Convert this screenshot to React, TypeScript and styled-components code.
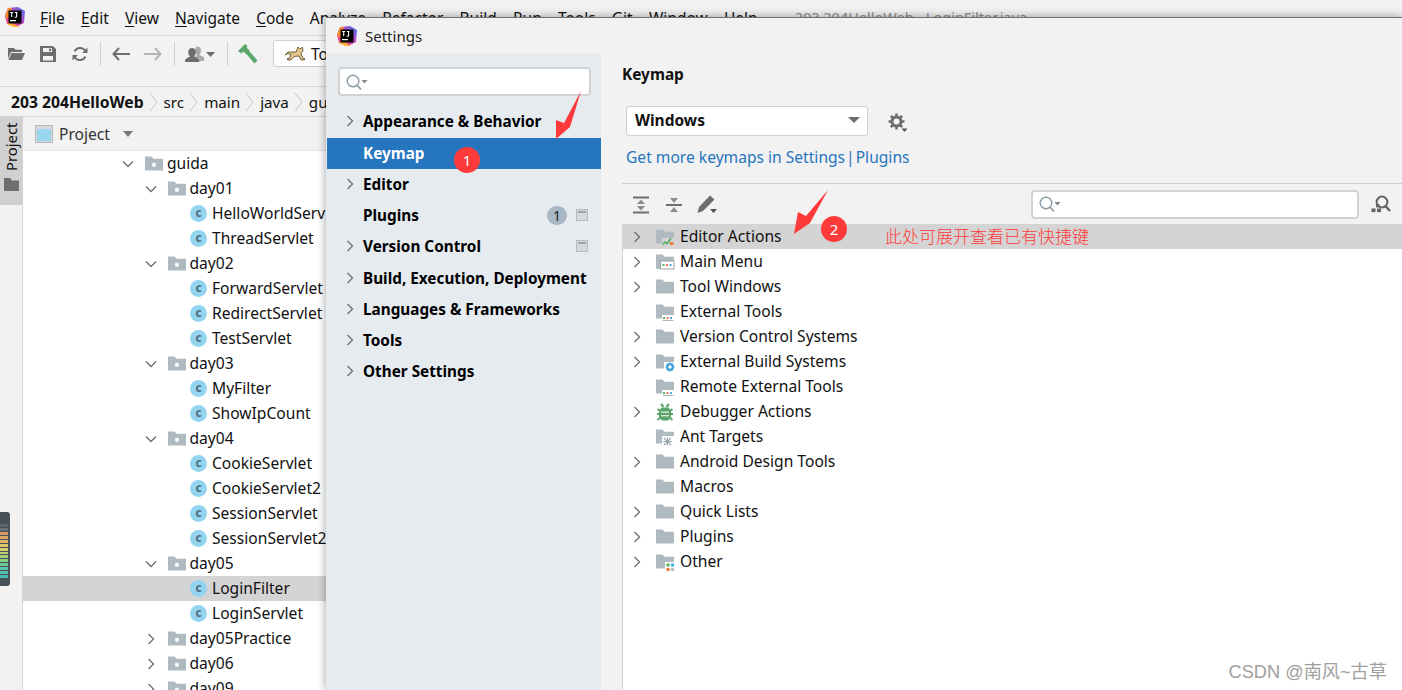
import React from "react";
import styled, { createGlobalStyle } from "styled-components";

const FONT = `"Noto Sans", "Noto Sans CJK SC", sans-serif`;

const Global = createGlobalStyle`
  html, body { margin: 0; padding: 0; background: #f2f2f2; overflow: hidden; }
  #root { width: 1402px; height: 690px; }
`;

const Page = styled.div`
  position: relative;
  width: 1402px;
  height: 690px;
  overflow: hidden;
  background: #f2f2f2;
  font-family: ${FONT};
  font-size: 15.6px;
  color: #111;
  display: flex;
  flex-direction: column;
`;

/* ---------- IDE behind ---------- */
const MenuBar = styled.div`
  height: 35px;
  flex: none;
  display: flex;
  align-items: center;
  padding-left: 5px;
  border-bottom: 1px solid #d4d4d4;
`;
const MenuLogo = styled.div`
  width: 20px;
  height: 20px;
  margin-right: 15px;
  margin-top: -2px;
  display: flex;
`;
const MenuItems = styled.div`
  display: flex;
  gap: 16.2px;
`;
const MenuItem = styled.span`
  white-space: nowrap;
  font-size: 15.5px;
  & u { text-underline-offset: 2px; }
`;
const WindowTitle = styled.span`
  margin-left: 37px;
  margin-top: -1px;
  color: #8e8e8e;
  white-space: nowrap;
  font-size: 14.5px;
`;
const ToolBar = styled.div`
  height: 51px;
  flex: none;
  display: flex;
  align-items: flex-start;
  padding-top: 4px;
  box-sizing: border-box;
  border-bottom: 1px solid #d4d4d4;
`;
const Slot = styled.div<{ $w: number }>`
  width: ${(p) => p.$w}px;
  height: 28px;
  display: flex;
  align-items: center;
  justify-content: center;
  flex: none;
`;
const VSep = styled.div`
  width: 1px;
  height: 24px;
  margin: 2px 4px;
  background: #cfcfcf;
  flex: none;
`;
const RunCombo = styled.div`
  margin-left: 9px;
  width: 200px;
  height: 27px;
  box-sizing: border-box;
  background: #fff;
  border: 1px solid #cfcfcf;
  border-radius: 3px;
  display: flex;
  align-items: center;
  padding-left: 11px;
  gap: 6px;
  flex: none;
`;
const Breadcrumb = styled.div`
  height: 30px;
  flex: none;
  box-sizing: border-box;
  border-bottom: 1px solid #d4d4d4;
  display: flex;
  align-items: center;
  padding-left: 11px;
  white-space: nowrap;
`;
const Crumb = styled.span<{ $bold?: boolean }>`
  font-weight: ${(p) => (p.$bold ? 700 : 400)};
  font-size: ${(p) => (p.$bold ? 15.7 : 15.2)}px;
`;
const CrumbSep = styled.svg`
  width: 10px;
  height: 24px;
  margin: 0 5px 0 5px;
  flex: none;
`;
const Body = styled.div`
  flex: 1;
  display: flex;
  min-height: 0;
`;
const Strip = styled.div`
  width: 22px;
  flex: none;
  border-right: 1px solid #d4d4d4;
`;
const StripTab = styled.div`
  height: 88px;
  background: #d0d0d0;
  display: flex;
  flex-direction: column;
  align-items: center;
  padding-top: 7px;
  box-sizing: border-box;
  gap: 7px;
`;
const StripLabel = styled.span`
  writing-mode: vertical-rl;
  transform: rotate(180deg);
  font-size: 14.8px;
  line-height: 20px;
  height: 47px;
`;
const TreePanel = styled.div`
  flex: 1;
  min-width: 0;
  display: flex;
  flex-direction: column;
`;
const PanelHeader = styled.div`
  height: 34px;
  flex: none;
  display: flex;
  align-items: center;
  box-sizing: border-box;
  border-bottom: 1px solid #e4e4e4;
  padding-left: 12px;
  gap: 6px;
  color: #333;
`;
const TreeBody = styled.div`
  flex: 1;
  background: #fff;
  overflow: hidden;
`;
const TreeRow = styled.div<{ $level: number; $selected?: boolean }>`
  height: 25px;
  display: flex;
  align-items: center;
  box-sizing: border-box;
  padding-left: ${(p) => 97 + p.$level * 22.5}px;
  background: ${(p) => (p.$selected ? "#d4d4d4" : "transparent")};
  white-space: nowrap;
`;
const ChevronBox = styled.div<{ $gap: number }>`
  width: 16px;
  height: 16px;
  margin-right: ${(p) => p.$gap}px;
  display: flex;
  align-items: center;
  justify-content: center;
  flex: none;
`;
const NodeLabel = styled.span<{ $gap: number }>`
  margin-left: ${(p) => p.$gap}px;
  font-size: 15.6px;
  line-height: 25px;
`;
const ClassIcon = styled.span`
  width: 17px;
  height: 17px;
  border-radius: 50%;
  background: #93d4ee;
  color: #4e6c7c;
  font-size: 12px;
  font-weight: 700;
  line-height: 15px;
  text-align: center;
  flex: none;
  margin-right: -1px;
`;
const Widget = styled.div`
  position: absolute;
  left: 0;
  top: 512px;
  width: 10px;
  height: 74px;
  background: #474f57;
  border-radius: 0 3px 3px 0;
  box-sizing: border-box;
  padding: 8px 2px 8px 0;
  display: flex;
  flex-direction: column;
  gap: 1px;
`;
const WidgetBar = styled.div<{ $c: string }>`
  flex: 1;
  background: ${(p) => p.$c};
`;

/* ---------- Settings dialog ---------- */
const Dialog = styled.div`
  position: absolute;
  left: 326px;
  top: 17px;
  right: 0;
  bottom: 0;
  background: #f2f2f2;
  border-top: 1px solid #6f6f6f;
  box-shadow: 0 0 9px rgba(0, 0, 0, 0.38);
  display: flex;
  flex-direction: column;
`;
const DialogTitle = styled.div`
  height: 35px;
  flex: none;
  display: flex;
  align-items: center;
  padding-left: 11px;
  gap: 8px;
  font-size: 15px;
  color: #222;
`;
const DialogBody = styled.div`
  flex: 1;
  display: flex;
  min-height: 0;
`;
const Sidebar = styled.div`
  width: 275px;
  flex: none;
  background: #e6ebf0;
  padding-top: 14px;
  box-sizing: border-box;
`;
const SearchBox = styled.div<{ $w: number }>`
  width: ${(p) => p.$w}px;
  height: 29px;
  box-sizing: border-box;
  background: #fff;
  border: 2px solid #d0d2d4;
  border-radius: 4px;
  display: flex;
  align-items: center;
  padding-left: 5px;
  flex: none;
`;
const SidebarSearch = styled.div`
  padding: 0 0 10.5px 12px;
`;
const NavRow = styled.div<{ $selected?: boolean }>`
  height: 31.25px;
  display: flex;
  align-items: center;
  box-sizing: border-box;
  padding: 0 13px 1.4px 16px;
  margin-left: ${(p) => (p.$selected ? "1px" : "0")};
  background: ${(p) => (p.$selected ? "#2675bf" : "transparent")};
  color: ${(p) => (p.$selected ? "#fff" : "#000")};
  font-weight: 700;
  font-size: 15.3px;
  white-space: nowrap;
`;
const NavChevron = styled.div<{ $selected?: boolean }>`
  width: 16px;
  height: 16px;
  margin-right: ${(p) => (p.$selected ? 4 : 5)}px;
  display: flex;
  align-items: center;
  justify-content: center;
  flex: none;
`;
const NavSpacer = styled.div`
  flex: 1;
`;
const CountBadge = styled.span`
  width: 20px;
  height: 19px;
  border-radius: 10px;
  background: #a9b8c4;
  color: #222;
  font-size: 14px;
  font-weight: 400;
  line-height: 19px;
  text-align: center;
  margin-right: 9px;
`;
const Pane = styled.div`
  flex: 1;
  min-width: 0;
  display: flex;
  flex-direction: column;
  padding-left: 21px;
`;
const PaneTitle = styled.div`
  font-weight: 700;
  font-size: 15.4px;
  line-height: 20px;
  margin-top: 12px;
`;
const SelectRow = styled.div`
  display: flex;
  align-items: center;
  margin: 21px 0 0 4px;
  gap: 20px;
`;
const Select = styled.div`
  width: 242px;
  height: 30px;
  box-sizing: border-box;
  background: #fff;
  border: 1px solid #cfcfcf;
  border-radius: 3px;
  display: flex;
  align-items: center;
  justify-content: space-between;
  padding: 0 7px 2px 8px;
  font-weight: 700;
  font-size: 15.5px;
`;
const GearBox = styled.div`
  display: flex;
  margin-top: 4px;
`;
const Caret = styled.span<{ $size?: number; $color?: string }>`
  width: 0;
  height: 0;
  border-left: ${(p) => p.$size ?? 6}px solid transparent;
  border-right: ${(p) => p.$size ?? 6}px solid transparent;
  border-top: ${(p) => (p.$size ?? 6) * 1.1}px solid ${(p) => p.$color ?? "#6e6e6e"};
  flex: none;
`;
const LinkLine = styled.div`
  margin: 10px 0 0 4px;
  color: #2675bf;
  font-size: 15.6px;
  line-height: 22px;
  display: flex;
  gap: 1px;
`;
const PaneDivider = styled.div`
  height: 1px;
  background: #cfcfcf;
  margin-top: 15px;
`;
const ActionBar = styled.div`
  height: 40px;
  display: flex;
  align-items: center;
  padding-left: 8px;
  flex: none;
`;
const ActionIcon = styled.div`
  width: 22px;
  height: 22px;
  margin-right: 11px;
  margin-top: 2px;
  display: flex;
  align-items: center;
  justify-content: center;
  flex: none;
`;
const ActionRight = styled.div`
  margin-left: auto;
  display: flex;
  align-items: center;
  gap: 12px;
  padding-right: 11px;
`;
const KeyTree = styled.div`
  flex: 1;
  background: #fff;
  border-left: 1px solid #d0d0d0;
  overflow: hidden;
`;
const KeyRow = styled.div<{ $selected?: boolean }>`
  height: 25px;
  display: flex;
  align-items: center;
  padding-left: 6px;
  background: ${(p) => (p.$selected ? "#d4d4d4" : "transparent")};
  white-space: nowrap;
`;

/* ---------- Annotations ---------- */
const ArrowLayer = styled.svg`
  position: absolute;
  left: 0;
  top: 0;
  pointer-events: none;
`;
const Bubble = styled.div<{ $x: number; $y: number }>`
  position: absolute;
  left: ${(p) => p.$x - 13}px;
  top: ${(p) => p.$y - 13}px;
  width: 26px;
  height: 26px;
  border-radius: 50%;
  background: #ff3a3a;
  color: #fff;
  font-size: 15px;
  line-height: 26px;
  text-align: center;
`;
const Note = styled.div`
  position: absolute;
  left: 885px;
  top: 224px;
  line-height: 24px;
  font-size: 17px;
  color: #ff3a3a;
  font-family: "Noto Sans CJK SC", sans-serif;
  font-weight: 300;
  white-space: nowrap;
`;
const Watermark = styled.div`
  position: absolute;
  right: 15px;
  top: 661px;
  font-family: "Liberation Sans", "Noto Sans CJK SC", sans-serif;
  font-size: 18.2px;
  line-height: 22px;
  color: #a0a0a0;
  white-space: nowrap;
`;

/* ---------- Drawings ---------- */
const Logo = ({ size }: { size: number }) => (
  <svg width={size} height={size} viewBox="0 0 20 20">
    <defs>
      <linearGradient id="lg" x1="0" y1="1" x2="1" y2="0">
        <stop offset="0" stopColor="#fc4a6b" />
        <stop offset=".5" stopColor="#d23fc0" />
        <stop offset="1" stopColor="#3a7cf5" />
      </linearGradient>
    </defs>
    <polygon points="3,1 13,0 20,4 19,16 11,20 2,17 0,9" fill="url(#lg)" />
    <polygon points="0,9 3,1 7,1 3,12" fill="#fb8a2e" />
    <polygon points="2,17 8,20 14,20 5,14" fill="#ffb02e" opacity=".9" />
    <rect x="3.5" y="3.5" width="13" height="13" fill="#000" />
    <rect x="5" y="13" width="6" height="1.2" fill="#fff" />
    <path d="M5.2 5.5h3M6.7 5.5v4.6M9.8 5.5h2.6M11.6 5.5v3.8c0 .9-1 1.2-2 .6" stroke="#fff" strokeWidth="1.1" fill="none" />
  </svg>
);

const Chevron = ({ open, color = "#6e6e6e" }: { open?: boolean; color?: string }) => (
  <svg width="12" height="12" viewBox="0 0 12 12">
    <path d={open ? "M1 3.5 6 8.5 11 3.5" : "M3.5 1 8.5 6 3.5 11"} stroke={color} strokeWidth="1.3" fill="none" />
  </svg>
);

const FOLDER = "M0 1.5h6.5l2 2.2H18V15.5H0z";

type Badge = "dot" | "chart" | "menu" | "tools" | "gear" | "ant" | "other" | "none";
const Folder = ({ badge = "none" }: { badge?: Badge }) => (
  <svg width="18" height="18" viewBox="0 0 18 18" style={{ flex: "none", overflow: "visible" }}>
    {badge === "menu" ? (
      <path d="M0 1.5h6.5l2 2.2H18V8H5v8H0z" fill="#aeb9c0" />
    ) : (
      <path d={FOLDER} fill="#aeb9c0" />
    )}
    {badge === "dot" && <circle cx="9" cy="9.8" r="2.2" fill="#f4f6f7" />}
    {badge === "chart" && (
      <>
        <rect x="6" y="10" width="12" height="8" fill="#d4d4d4" />
        <path d="M6.5 16.5 9 14l2 1.6 4-5" stroke="#4fa85a" strokeWidth="1.6" fill="none" />
        <rect x="14" y="14" width="3.4" height="3" fill="#ee7a3a" />
      </>
    )}
    {badge === "menu" && (
      <>
        <rect x="4.5" y="8" width="13.5" height="8" fill="#fff" stroke="#9aa5ab" strokeWidth="1" />
        <rect x="6.5" y="11" width="2" height="2" fill="#55b060" />
        <rect x="10" y="11" width="2" height="2" fill="#e67a55" />
        <rect x="13.5" y="11" width="2" height="2" fill="#4aa5e0" />
      </>
    )}
    {badge === "tools" && (
      <>
        <rect x="6" y="12" width="12" height="6" fill="#fff" />
        <rect x="7" y="14" width="2" height="2" fill="#55b060" />
        <rect x="10.5" y="14" width="2" height="2" fill="#e67a55" />
        <rect x="14" y="14" width="2" height="2" fill="#4aa5e0" />
        <rect x="6.5" y="17" width="11" height="1" fill="#aeb9c0" />
      </>
    )}
    {badge === "gear" && (
      <>
        <rect x="8" y="9" width="10" height="10" fill="#fff" />
        <circle cx="14" cy="14" r="2.8" fill="none" stroke="#3fa2dd" strokeWidth="2.2" />
        <path d="M14 9.500v2M14 16.500v2M9.600 14h2M16.400 14h2M10.900 10.900l1.400 1.400M15.700 15.700l1.400 1.400M17.100 10.900l-1.400 1.400M12.300 15.700l-1.400 1.400" stroke="#3fa2dd" strokeWidth="1.6" />
      </>
    )}
    {badge === "ant" && (
      <>
        <rect x="6" y="8" width="12" height="10" fill="#fff" />
        <path d="M8 10l7 7M15 10l-7 7M7 13.500h9M11.500 9.500v8" stroke="#9aa5ab" strokeWidth="1.1" />
      </>
    )}
    {badge === "other" && (
      <>
        <rect x="9" y="9" width="9" height="10" fill="#fff" />
        <circle cx="12" cy="12" r="1.8" fill="#55b060" />
        <circle cx="16.500" cy="12" r="1.8" fill="#3fb4e6" />
        <circle cx="12" cy="16.500" r="1.8" fill="#ee7a3a" />
        <circle cx="16.500" cy="16.500" r="1.8" fill="#aeb9c0" />
      </>
    )}
  </svg>
);

const Bug = () => (
  <svg width="18" height="18" viewBox="0 0 18 18" style={{ flex: "none" }}>
    <path d="M5 1l2.500 3M13 1l-2.500 3M1.500 6l3 2M16.500 6l-3 2M1 11h3M14 11h3M1.500 17l3-2.500M16.500 17l-3-2.500" stroke="#5aa468" strokeWidth="2" />
    <path d="M5.500 4.500h7L15 8v6l-3 3.500H6L3 14V8z" fill="#5aa468" />
    <rect x="5" y="8.500" width="8" height="1.400" fill="#d8ecd9" />
    <rect x="5" y="12" width="8" height="1.400" fill="#d8ecd9" />
  </svg>
);

const Magnifier = () => (
  <svg width="26" height="18" viewBox="0 0 26 18" style={{ flex: "none" }}>
    <circle cx="8" cy="8" r="5.800" fill="none" stroke="#8a9aa3" strokeWidth="1.4" />
    <path d="M12 12.200 16 16.400" stroke="#8a9aa3" strokeWidth="1.6" />
    <path d="M16.500 7h6l-3 3.400z" fill="#8a8a8a" />
  </svg>
);

const FolderOpenIcon = () => (
  <svg width="18" height="16" viewBox="0 0 18 16">
    <path d="M1 2h6l1.500 1.700H15V6H4L1 13z" fill="#6e6e6e" />
    <path d="M4.500 7H18l-3 7H1.500z" fill="#6e6e6e" />
  </svg>
);
const SaveIcon = () => (
  <svg width="16" height="16" viewBox="0 0 16 16">
    <path fillRule="evenodd" d="M0 0h13l3 3v13H0zM3 2v4h9V2zM3 10v4.500h10V10z" fill="#6e6e6e" />
    <rect x="9" y="2.600" width="2" height="2.600" fill="#6e6e6e" />
  </svg>
);
const SyncIcon = () => (
  <svg width="16" height="16" viewBox="0 0 16 16">
    <path d="M13.500 5.400A6 6 0 0 0 2.600 5.500M2.500 10.600a6 6 0 0 0 10.900-.1" stroke="#6e6e6e" strokeWidth="2" fill="none" />
    <path d="M15.500 1.500v5.500H10zM0.500 14.500V9H6z" fill="#6e6e6e" />
  </svg>
);
const ArrowIcon = ({ right, color }: { right?: boolean; color: string }) => (
  <svg width="18" height="14" viewBox="0 0 18 14" style={right ? { transform: "scaleX(-1)" } : undefined}>
    <path d="M7 1 1.500 7 7 13M2 7h16" stroke={color} strokeWidth="2" fill="none" />
  </svg>
);
const UserIcon = () => (
  <svg width="32" height="16" viewBox="0 0 32 16">
    <path d="M10.500 0.500c2 0 3.500 1.700 3.500 4 0 2-1 3.400-1.600 4 .4 1 2.700 1.600 4.600 3V15H6v-1c0-2 3-3.600 4-5-.9-1-2-2.200-2-4 0-2.600 1-4.500 2.500-4.500z" fill="#8a8a8a" opacity=".7" transform="translate(2 0)" />
    <path d="M7 2c2.300 0 3.800 1.800 3.800 4.300 0 2-1 3.200-1.600 3.900.5 1.200 5 1.700 5 4.800v1H0v-1c0-3 4.400-3.600 5-4.800C4.300 9.500 3.200 8.300 3.200 6.300 3.200 3.800 4.700 2 7 2z" fill="#6e6e6e" />
    <path d="M21 6h9l-4.500 5z" fill="#6e6e6e" />
  </svg>
);
const HammerIcon = () => (
  <svg width="20" height="20" viewBox="0 0 20 20">
    <path d="M0 7 7 0l2.500 2-1 1.500L12 7l-3.500 3.500L5.500 7.500 3 9.500z" fill="#59a869" />
    <path d="M8 9.500 11 7l8.500 9.500-3 3z" fill="#59a869" />
  </svg>
);
const TomcatIcon = () => (
  <svg width="20" height="16" viewBox="0 0 20 16">
    <path d="M13 1l1.500 1.500h1.500L17.500 1l.5 4-2 2.500 2 5h1.500v1.500h-3.500l-2-4-5 .5-3 3.500H2.500V12.500H4l2-4L3 7.500 0 9l3-3h8z" fill="#e2c48a" stroke="#57421f" strokeWidth=".8" />
  </svg>
);
const ProjectIcon = () => (
  <svg width="18" height="18" viewBox="0 0 18 18">
    <rect x=".5" y=".5" width="17" height="17" fill="#d6dadd" stroke="#b4bbc0" />
    <rect x="2" y="4" width="14" height="12" fill="#9ad6f0" />
  </svg>
);
const StripFolder = () => (
  <svg width="15" height="13" viewBox="0 0 15 13">
    <path d="M0 0h6l2 2.400h7V13H0z" fill="#6e6e6e" />
  </svg>
);
const ExpandIcon = () => (
  <svg width="18" height="18" viewBox="0 0 18 18">
    <path d="M1 1.500h16M1 16.500h16" stroke="#6e6e6e" strokeWidth="2" />
    <path d="M9 3.500 13 8H5zM9 14.500 13 10H5z" fill="#8a8a8a" />
  </svg>
);
const CollapseIcon = () => (
  <svg width="18" height="18" viewBox="0 0 18 18">
    <path d="M1 9h16" stroke="#6e6e6e" strokeWidth="2" />
    <path d="M9 7 13 2H5zM9 11 13 16H5z" fill="#8a8a8a" />
  </svg>
);
const PencilIcon = () => (
  <svg width="22" height="22" viewBox="0 0 22 22">
    <path d="M14 1.500 18.500 5.500 7 17l-5.500 2L3 13z" fill="#6e6e6e" />
    <path d="M14 15h7l-3.500 4z" fill="#4f4f4f" />
  </svg>
);
const GearIcon = () => (
  <svg width="20" height="20" viewBox="0 0 20 20">
    <circle cx="8.500" cy="8.500" r="4.500" fill="none" stroke="#6e6e6e" strokeWidth="3" />
    <path d="M8.500 .5v3M8.500 13.500v3M.5 8.500h3M13.500 8.500h3M2.800 2.800 5 5M12 12l2.200 2.200M14.200 2.800 12 5M5 12l-2.200 2.200" stroke="#6e6e6e" strokeWidth="2.600" />
    <path d="M13.500 15.500h6l-3 3.500z" fill="#555" />
  </svg>
);
const FindShortcutIcon = () => (
  <svg width="20" height="18" viewBox="0 0 20 18">
    <circle cx="11" cy="7" r="5.400" fill="none" stroke="#636363" strokeWidth="2" />
    <path d="M14.500 11 19 16" stroke="#636363" strokeWidth="2.400" />
    <rect x="0.500" y="13.500" width="4" height="3.600" fill="#636363" />
    <rect x="6" y="13.500" width="4" height="3.600" fill="#636363" />
    <rect x="5" y="9" width="3.500" height="3.400" fill="#636363" />
  </svg>
);
const ProjectLevelIcon = () => (
  <svg width="12" height="12" viewBox="0 0 12 12" style={{ flex: "none" }}>
    <rect x=".5" y=".5" width="11" height="11" fill="#d4d9dd" stroke="#b5bcc2" />
    <rect x="2" y="2" width="8" height="2" fill="#9aa5ab" />
  </svg>
);

/* ---------- Data ---------- */
type TreeItem = { label: string; level: number; kind: "folder" | "class"; open?: boolean; selected?: boolean };
const folder = (label: string, level: number, open = true): TreeItem => ({ label, level, kind: "folder", open });
const cls = (label: string, selected = false): TreeItem => ({ label, level: 2, kind: "class", selected });

const tree: TreeItem[] = [
  folder("guida", 0),
  folder("day01", 1),
  cls("HelloWorldServlet"),
  cls("ThreadServlet"),
  folder("day02", 1),
  cls("ForwardServlet"),
  cls("RedirectServlet"),
  cls("TestServlet"),
  folder("day03", 1),
  cls("MyFilter"),
  cls("ShowIpCount"),
  folder("day04", 1),
  cls("CookieServlet"),
  cls("CookieServlet2"),
  cls("SessionServlet"),
  cls("SessionServlet2"),
  folder("day05", 1),
  cls("LoginFilter", true),
  cls("LoginServlet"),
  folder("day05Practice", 1, false),
  folder("day06", 1, false),
  folder("day09", 1, false),
];

const menus: [string, string][] = [
  ["F", "ile"],
  ["E", "dit"],
  ["V", "iew"],
  ["N", "avigate"],
  ["C", "ode"],
  ["", "Analyze"],
  ["", "Refactor"],
  ["", "Build"],
  ["", "Run"],
  ["", "Tools"],
  ["", "Git"],
  ["", "Window"],
  ["", "Help"],
];

const navItems = [
  { label: "Appearance & Behavior", arrow: true },
  { label: "Keymap", selected: true },
  { label: "Editor", arrow: true },
  { label: "Plugins", count: 1, level: true },
  { label: "Version Control", arrow: true, level: true },
  { label: "Build, Execution, Deployment", arrow: true },
  { label: "Languages & Frameworks", arrow: true },
  { label: "Tools", arrow: true },
  { label: "Other Settings", arrow: true },
];

const keyRows: { label: string; arrow: boolean; badge?: Badge; bug?: boolean; selected?: boolean }[] = [
  { label: "Editor Actions", arrow: true, badge: "chart", selected: true },
  { label: "Main Menu", arrow: true, badge: "menu" },
  { label: "Tool Windows", arrow: true },
  { label: "External Tools", arrow: false, badge: "tools" },
  { label: "Version Control Systems", arrow: true },
  { label: "External Build Systems", arrow: true, badge: "gear" },
  { label: "Remote External Tools", arrow: false, badge: "tools" },
  { label: "Debugger Actions", arrow: true, bug: true },
  { label: "Ant Targets", arrow: false, badge: "ant" },
  { label: "Android Design Tools", arrow: true },
  { label: "Macros", arrow: false },
  { label: "Quick Lists", arrow: true },
  { label: "Plugins", arrow: true },
  { label: "Other", arrow: true, badge: "other" },
];

const widgetColors = ["#474f57", "#5d646b", "#6a7076", "#d89a63", "#dba566", "#dcb368", "#dcc36a", "#d3cd6c", "#bcd071", "#a3d07a", "#86cd86", "#6cc996", "#5cc4a6", "#52bfb0", "#4cb8b5"];

const CrumbChevron = () => (
  <CrumbSep viewBox="0 0 10 24">
    <path d="M1 3 8 12 1 21" stroke="#c4c4c4" strokeWidth="1" fill="none" />
  </CrumbSep>
);

export default function App() {
  return (
    <Page>
      <Global />
      <MenuBar>
        <MenuLogo>
          <Logo size={20} />
        </MenuLogo>
        <MenuItems>
          {menus.map(([u, rest]) => (
            <MenuItem key={u + rest}>
              {u && <u>{u}</u>}
              {rest}
            </MenuItem>
          ))}
        </MenuItems>
        <WindowTitle>203 204HelloWeb - LoginFilter.java</WindowTitle>
      </MenuBar>
      <ToolBar>
        <Slot $w={32}><FolderOpenIcon /></Slot>
        <Slot $w={32}><SaveIcon /></Slot>
        <Slot $w={32}><SyncIcon /></Slot>
        <VSep />
        <Slot $w={31}><ArrowIcon color="#6e6e6e" /></Slot>
        <Slot $w={34}><ArrowIcon right color="#b4b4b4" /></Slot>
        <VSep />
        <Slot $w={44}><UserIcon /></Slot>
        <VSep />
        <Slot $w={32}><HammerIcon /></Slot>
        <RunCombo>
          <TomcatIcon />
          <span>Tomcat</span>
        </RunCombo>
      </ToolBar>
      <Breadcrumb>
        <Crumb $bold>203 204HelloWeb</Crumb>
        <CrumbChevron />
        <Crumb>src</Crumb>
        <CrumbChevron />
        <Crumb>main</Crumb>
        <CrumbChevron />
        <Crumb>java</Crumb>
        <CrumbChevron />
        <Crumb>guida</Crumb>
      </Breadcrumb>
      <Body>
        <Strip>
          <StripTab>
            <StripLabel>Project</StripLabel>
            <StripFolder />
          </StripTab>
        </Strip>
        <TreePanel>
          <PanelHeader>
            <ProjectIcon />
            <span>Project</span>
            <Slot $w={24}><Caret $size={5.500} $color="#777" /></Slot>
          </PanelHeader>
          <TreeBody>
            {tree.map((n) => (
              <TreeRow key={n.label} $level={n.level} $selected={n.selected}>
                <ChevronBox $gap={9}>
                  {n.kind === "folder" && <Chevron open={n.open} />}
                </ChevronBox>
                {n.kind === "folder" ? <Folder badge="dot" /> : <ClassIcon>c</ClassIcon>}
                <NodeLabel $gap={n.kind === "folder" ? 4 : 6}>{n.label}</NodeLabel>
              </TreeRow>
            ))}
          </TreeBody>
        </TreePanel>
      </Body>
      <Widget>
        {widgetColors.map((c, i) => (
          <WidgetBar key={i} $c={c} />
        ))}
      </Widget>

      <Dialog>
        <DialogTitle>
          <Logo size={20} />
          <span>Settings</span>
        </DialogTitle>
        <DialogBody>
          <Sidebar>
            <SidebarSearch>
              <SearchBox $w={253}><Magnifier /></SearchBox>
            </SidebarSearch>
            {navItems.map((it) => (
              <NavRow key={it.label} $selected={it.selected}>
                <NavChevron $selected={it.selected}>{it.arrow && <Chevron />}</NavChevron>
                <span>{it.label}</span>
                <NavSpacer />
                {it.count && <CountBadge>{it.count}</CountBadge>}
                {it.level && <ProjectLevelIcon />}
              </NavRow>
            ))}
          </Sidebar>
          <Pane>
            <PaneTitle>Keymap</PaneTitle>
            <SelectRow>
              <Select>
                <span>Windows</span>
                <Caret />
              </Select>
              <GearBox><GearIcon /></GearBox>
            </SelectRow>
            <LinkLine>
              <span>Get more keymaps in Settings</span>
              <span>|</span>
              <span>Plugins</span>
            </LinkLine>
            <PaneDivider />
            <ActionBar>
              <ActionIcon><ExpandIcon /></ActionIcon>
              <ActionIcon><CollapseIcon /></ActionIcon>
              <ActionIcon><PencilIcon /></ActionIcon>
              <ActionRight>
                <SearchBox $w={328}><Magnifier /></SearchBox>
                <FindShortcutIcon />
              </ActionRight>
            </ActionBar>
            <KeyTree>
              {keyRows.map((r) => (
                <KeyRow key={r.label} $selected={r.selected}>
                  <ChevronBox $gap={11}>{r.arrow && <Chevron />}</ChevronBox>
                  {r.bug ? <Bug /> : <Folder badge={r.badge} />}
                  <NodeLabel $gap={6}>{r.label}</NodeLabel>
                </KeyRow>
              ))}
            </KeyTree>
          </Pane>
        </DialogBody>
      </Dialog>

      <ArrowLayer width="1402" height="690" viewBox="0 0 1402 690">
        <polygon points="581,91 570,127 556,139 556,120 564,123" fill="#ff3a3a" />
        <polygon points="828,190 810,223 794,234 798,212 806,216" fill="#ff3a3a" />
      </ArrowLayer>
      <Bubble $x={467} $y={160}>1</Bubble>
      <Bubble $x={834} $y={229}>2</Bubble>
      <Note>此处可展开查看已有快捷键</Note>
      <Watermark>CSDN @南风~古草</Watermark>
    </Page>
  );
}
